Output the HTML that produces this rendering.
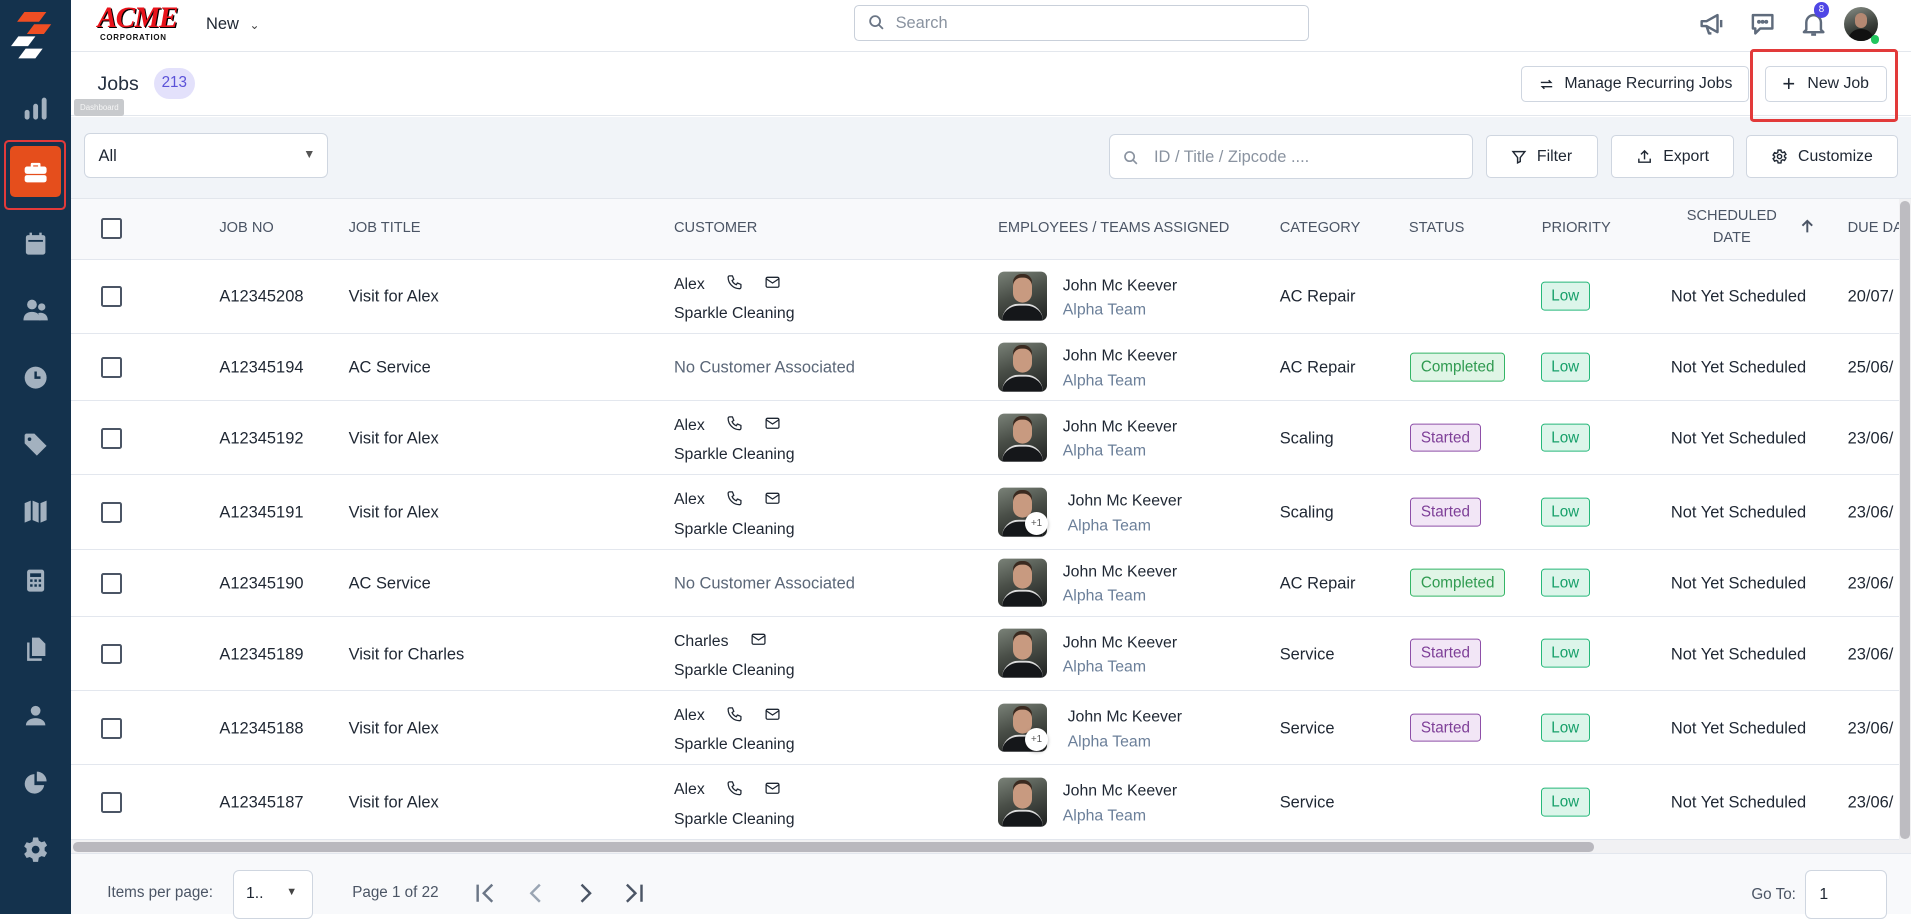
<!DOCTYPE html>
<html><head><meta charset="utf-8">
<style>
html{zoom:1.21875}
*{box-sizing:border-box;margin:0;padding:0}
body{width:1568px;height:750px;overflow:hidden;font-family:"Liberation Sans",Arial,sans-serif;color:#1f2733;background:#fff;position:relative;font-size:13px}
.abs{position:absolute}
.side{left:0;top:0;width:58px;height:750px;background:#14324d}
.ic{position:absolute;left:17px;width:24px;height:24px}
.top{left:58px;top:0;width:1510px;height:43px;border-bottom:1px solid #e3e7ed;background:#fff}
.btn{position:absolute;background:#fff;border:1px solid #cfd6e0;border-radius:4px;display:flex;align-items:center;justify-content:center;gap:8px;font-size:13px;color:#1f2733}
.th{position:absolute;font-size:12px;color:#4b5565;top:187px;transform:translateY(-50%)}
.cb{position:absolute;left:83px;width:17px;height:17px;border:2px solid #4b5565;border-radius:2px;background:#fff}
.row{position:absolute;left:58px;width:1500px;border-bottom:1px solid #e3e7ee;background:#fff}
.c{position:absolute;top:50%;transform:translateY(-50%);white-space:nowrap;font-size:13.5px;margin-top:1px}
.two{position:absolute;top:50%;transform:translateY(-50%);white-space:nowrap;margin-top:2px}
.av{position:absolute;top:50%;transform:translateY(-50%);left:761px;width:40px;height:40px;border-radius:5px;background:linear-gradient(160deg,#7a8278 0%,#4a4f48 45%,#1e2020 100%);overflow:hidden}
.av:before{content:"";position:absolute;left:12px;top:5px;width:16px;height:20px;border-radius:8px 8px 9px 9px;background:#c89a80;box-shadow:0 -3px 0 #3a2a20}
.av:after{content:"";position:absolute;left:3px;top:26px;width:34px;height:20px;border-radius:14px 14px 0 0;background:#15171a;border-top:2px solid #ddd}
.p1{position:absolute;left:783px;width:19px;height:19px;border-radius:50%;background:#fff;box-shadow:0 1px 3px rgba(0,0,0,.3);font-size:8px;color:#555;display:flex;align-items:center;justify-content:center}
.bd{position:absolute;top:50%;transform:translateY(-50%);padding:4px 8px;border-radius:3px;font-size:12.5px}
.low{left:1206px;background:#dcf5ea;border:1px solid #26b87a;color:#17a06a}
.comp{left:1099px;background:#e0f5e6;border:1px solid #34b566;color:#2f9a50}
.st{left:1099px;background:#f2e6f6;border:1px solid #8e4fa8;color:#7e3f98}
.sub{color:#6b7f99}
.ph,.ml{display:inline-block;width:14px;height:14px;vertical-align:-2px}
</style></head><body>
<svg width="0" height="0" style="position:absolute"><defs>
<symbol id="phone" viewBox="0 0 24 24"><path d="M5 3h4l2 5-2.5 1.5a11 11 0 0 0 6 6L16 13l5 2v4a2 2 0 0 1-2 2A16 16 0 0 1 3 5a2 2 0 0 1 2-2" fill="none" stroke="#1f2733" stroke-width="1.8" stroke-linejoin="round"/></symbol>
<symbol id="mail" viewBox="0 0 24 24"><rect x="3" y="5" width="18" height="14" rx="2" fill="none" stroke="#1f2733" stroke-width="1.8"/><path d="M3 7l9 6 9-6" fill="none" stroke="#1f2733" stroke-width="1.8"/></symbol>
</defs></svg>

<div class="abs side">
 <svg class="abs" style="left:9px;top:10px" width="34" height="38" viewBox="0 0 34 38"><polygon points="11,0 29,0 23,8 5,8" fill="#f04e23"/><polygon points="19,10 33,10 27,18 13,18" fill="#f04e23"/><polygon points="6,20 20,20 14,28 0,28" fill="#fff"/><polygon points="12,30 26,30 20,38 6,38" fill="#fff"/></svg>
 <svg class="ic" style="top:77px" viewBox="0 0 24 24" fill="#a3b1bf"><rect x="3" y="13" width="4" height="8" rx="2"/><rect x="10" y="8" width="4" height="13" rx="2"/><rect x="17" y="3" width="4" height="18" rx="2"/></svg>
 <div class="abs" style="left:3px;top:115px;width:51px;height:57px;border:2px solid #e23a3a;border-radius:4px"></div>
 <div class="abs" style="left:8px;top:120px;width:42px;height:42px;background:#e54e1c;border-radius:4px"></div>
 <svg class="ic" style="top:130px" viewBox="0 0 24 24" fill="#fff"><path d="M9 4h6a1 1 0 0 1 1 1v2h-2V6h-4v1H8V5a1 1 0 0 1 1-1z"/><rect x="3" y="7" width="18" height="6" rx="2"/><rect x="3" y="14" width="18" height="6" rx="2"/></svg>
 <svg class="ic" style="top:188px" viewBox="0 0 24 24" fill="#a3b1bf"><rect x="4" y="5" width="16" height="16" rx="2"/><rect x="7" y="3" width="2" height="4"/><rect x="15" y="3" width="2" height="4"/><rect x="6" y="9" width="12" height="1.5" fill="#14324d"/></svg>
 <svg class="ic" style="top:243px" viewBox="0 0 24 24" fill="#a3b1bf"><circle cx="9" cy="7" r="4"/><path d="M2 20c0-5 3-7 7-7s7 2 7 7z"/><circle cx="17" cy="9" r="3"/><path d="M15 20c0-3 0-5-1-6 4-1 8 1 8 6z"/></svg>
 <svg class="ic" style="top:298px" viewBox="0 0 24 24"><circle cx="12" cy="12" r="9" fill="#a3b1bf"/><path d="M12 7v5h4" stroke="#14324d" stroke-width="2" fill="none"/></svg>
 <svg class="ic" style="top:353px" viewBox="0 0 24 24" fill="#a3b1bf"><path d="M3 4v7l10 10 8-8L11 3H4zM7 6a1.5 1.5 0 1 1 0 3 1.5 1.5 0 0 1 0-3z"/></svg>
 <svg class="ic" style="top:408px" viewBox="0 0 24 24" fill="#a3b1bf"><path d="M3 5l5-2v16l-5 2zM9.5 3l5 2v16l-5-2zM16 5l5-2v16l-5 2z"/></svg>
 <svg class="ic" style="top:464px" viewBox="0 0 24 24"><rect x="5" y="3" width="14" height="18" rx="2" fill="#a3b1bf"/><rect x="7.5" y="6" width="9" height="3" fill="#14324d"/><g fill="#14324d"><rect x="7.5" y="11" width="2" height="2"/><rect x="11" y="11" width="2" height="2"/><rect x="14.5" y="11" width="2" height="2"/><rect x="7.5" y="15" width="2" height="2"/><rect x="11" y="15" width="2" height="2"/><rect x="14.5" y="15" width="2" height="2"/></g></svg>
 <svg class="ic" style="top:520px" viewBox="0 0 24 24" fill="#a3b1bf"><path d="M9 3h6l5 5v10H9z"/><path d="M5 7h2v13h10v2H5z"/></svg>
 <svg class="ic" style="top:575px" viewBox="0 0 24 24" fill="#a3b1bf"><circle cx="12" cy="8" r="4"/><path d="M4 20c0-4 4-6 8-6s8 2 8 6z"/></svg>
 <svg class="ic" style="top:630px" viewBox="0 0 24 24" fill="#a3b1bf"><path d="M11 5a8 8 0 1 0 8 9h-8z"/><path d="M13 3a8 8 0 0 1 8 8h-8z"/></svg>
 <svg class="ic" style="top:685px" viewBox="0 0 24 24"><path fill="#a3b1bf" d="M10 2h4l.6 2.6 2.2 1.3 2.6-.8 2 3.4-2 1.9v2.4l2 1.9-2 3.4-2.6-.8-2.2 1.3L14 22h-4l-.6-2.6-2.2-1.3-2.6.8-2-3.4 2-1.9v-2.4l-2-1.9 2-3.4 2.6.8 2.2-1.3z"/><circle cx="12" cy="12" r="3.2" fill="#14324d"/></svg>
</div>

<div class="abs top">
 <div class="abs" style="left:22px;top:3px;font-family:'Liberation Serif',serif;font-weight:bold;font-size:24px;color:#e8131b;letter-spacing:-1px;line-height:24px;text-shadow:1px 1px 0 #000;font-style:italic">ACME</div>
 <div class="abs" style="left:24px;top:27px;font-size:6.5px;font-weight:bold;color:#111;letter-spacing:.6px">CORPORATION</div>
 <div class="abs" style="left:111px;top:12px;font-size:13.5px">New <span style="font-size:10px;margin-left:5px;color:#444">&#8964;</span></div>
 <div class="abs" style="left:643px;top:4px;width:373px;height:30px;border:1px solid #c9d0da;border-radius:4px">
  <svg class="abs" style="left:10px;top:7px" width="14" height="14" viewBox="0 0 24 24" fill="none" stroke="#6b7686" stroke-width="2.5"><circle cx="10" cy="10" r="7"/><path d="M15 15l6 6"/></svg>
  <span class="abs" style="left:33px;top:7px;font-size:13.5px;color:#8a93a0">Search</span>
 </div>
 <svg class="abs" style="left:1335px;top:7px" width="24" height="24" viewBox="0 0 24 24" fill="none" stroke="#5f6b7c" stroke-width="2" stroke-linejoin="round"><path d="M3 10h4l9-5v14l-9-5H3z"/><path d="M7 14l2 6h2"/><path d="M19 9v6"/></svg>
 <svg class="abs" style="left:1376px;top:7px" width="24" height="24" viewBox="0 0 24 24" fill="none" stroke="#5f6b7c" stroke-width="2" stroke-linejoin="round"><path d="M4 5h16v11H10l-4 4v-4H4z"/><circle cx="9" cy="10.5" r=".6" fill="#5f6b7c"/><circle cx="12" cy="10.5" r=".6" fill="#5f6b7c"/><circle cx="15" cy="10.5" r=".6" fill="#5f6b7c"/></svg>
 <svg class="abs" style="left:1418px;top:7px" width="24" height="24" viewBox="0 0 24 24" fill="none" stroke="#5f6b7c" stroke-width="2" stroke-linejoin="round"><path d="M6 17V11a6 6 0 0 1 12 0v6l2 2H4z"/><path d="M10 21h4"/></svg>
 <div class="abs" style="left:1430px;top:2px;width:13px;height:13px;border-radius:50%;background:#4f46e5;color:#fff;font-size:8px;text-align:center;line-height:13px">8</div>
 <div class="abs" style="left:1455px;top:6px;width:28px;height:28px;border-radius:50%;background:linear-gradient(160deg,#8a9088,#3d423d 55%,#111);overflow:hidden"><div class="abs" style="left:9px;top:5px;width:10px;height:12px;border-radius:5px;background:#b48872"></div><div class="abs" style="left:3px;top:18px;width:22px;height:12px;border-radius:10px 10px 0 0;background:#111"></div></div>
 <div class="abs" style="left:1477px;top:29px;width:7px;height:7px;border-radius:50%;background:#22c55e"></div>
</div>

<div class="abs" style="left:58px;top:43px;width:1510px;height:52px;background:#fff;border-bottom:1px solid #e3e7ed"></div>
<div class="abs" style="left:80px;top:60px;font-size:16px;color:#253040">Jobs</div>
<div class="abs" style="left:126px;top:56px;width:34px;height:25px;border-radius:13px;background:#e3e1fb;color:#5b52d8;font-size:12.5px;text-align:center;line-height:25px">213</div>
<div class="btn" style="left:1248px;top:54px;width:187px;height:30px"><svg width="14" height="14" viewBox="0 0 24 24" fill="none" stroke="#1f2733" stroke-width="2"><path d="M4 9h14l-3-3M20 15H6l3 3"/></svg>Manage Recurring Jobs</div>
<div class="btn" style="left:1448px;top:54px;width:100px;height:30px;gap:10px"><span style="font-size:18px;font-weight:300">+</span>New Job</div>

<div class="abs" style="left:58px;top:96px;width:1510px;height:67px;background:#f1f4f8;border-bottom:1px solid #e2e6ec"></div>
<div class="abs" style="left:1436px;top:40px;width:121px;height:60px;border:2.5px solid #e23a3a;border-radius:3px"></div>
<div class="abs" style="left:61px;top:81px;width:41px;height:14px;background:#c8cacd;border-radius:2px;font-size:6.5px;color:#f5f5f5;text-align:center;line-height:14px">Dashboard</div>
<div class="abs" style="left:69px;top:109px;width:200px;height:37px;background:#fff;border:1px solid #cfd6e0;border-radius:5px"><span class="abs" style="left:11px;top:11px;font-size:13.5px">All</span><span class="abs" style="left:179px;top:11px;font-size:10px;color:#555">&#9660;</span></div>
<div class="abs" style="left:910px;top:110px;width:299px;height:37px;background:#fff;border:1px solid #cfd6e0;border-radius:5px">
 <svg class="abs" style="left:11px;top:12px" width="13" height="13" viewBox="0 0 24 24" fill="none" stroke="#8a93a0" stroke-width="2.5"><circle cx="10" cy="10" r="7"/><path d="M15 15l6 6"/></svg>
 <span class="abs" style="left:36px;top:11px;font-size:13.5px;color:#8a93a0">ID / Title / Zipcode ....</span></div>
<div class="btn" style="left:1219px;top:111px;width:92px;height:35px"><svg width="13" height="13" viewBox="0 0 24 24" fill="none" stroke="#1f2733" stroke-width="2.2"><path d="M3 4h18l-7 9v6l-4 2v-8z"/></svg>Filter</div>
<div class="btn" style="left:1322px;top:111px;width:101px;height:35px"><svg width="14" height="14" viewBox="0 0 24 24" fill="none" stroke="#1f2733" stroke-width="2"><path d="M12 16V4M7 9l5-5 5 5M4 15v5h16v-5"/></svg>Export</div>
<div class="btn" style="left:1433px;top:111px;width:124px;height:35px"><svg width="14" height="14" viewBox="0 0 24 24" fill="none" stroke="#1f2733" stroke-width="2"><circle cx="12" cy="12" r="3"/><path d="M10 3h4l.5 2.5 2 1 2.5-1 2 3.5-2 1.5v2l2 1.5-2 3.5-2.5-1-2 1L14 21h-4l-.5-2.5-2-1-2.5 1-2-3.5 2-1.5v-2l-2-1.5 2-3.5 2.5 1 2-1z"/></svg>Customize</div>

<div class="abs" style="left:58px;top:163px;width:1500px;height:50px;background:#f8f9fb;border-bottom:1px solid #e3e7ee"></div>
<div class="cb" style="top:179px"></div>
<div class="th" style="left:180px">JOB NO</div>
<div class="th" style="left:286px">JOB TITLE</div>
<div class="th" style="left:553px">CUSTOMER</div>
<div class="th" style="left:819px">EMPLOYEES / TEAMS ASSIGNED</div>
<div class="th" style="left:1050px">CATEGORY</div>
<div class="th" style="left:1156px">STATUS</div>
<div class="th" style="left:1265px">PRIORITY</div>
<div class="th" style="left:1384px;text-align:center;line-height:18px">SCHEDULED<br>DATE</div>
<svg class="abs" style="left:1477px;top:180px" width="12" height="12" viewBox="0 0 12 12" fill="none" stroke="#4b5565" stroke-width="1.6"><path d="M6 11V2M2 5.5 6 1.5l4 4"/></svg>
<div class="th" style="left:1516px">DUE DA</div>

<div class="row" style="top:213px;height:61px">
 <div class="cb" style="left:25px;top:22px"></div>
 <div class="c" style="left:122px">A12345208</div><div class="c" style="left:228px">Visit for Alex</div>
 <div class="two" style="left:495px;line-height:24px">Alex <svg class="ph" style="margin-left:14px"><use href="#phone"/></svg><svg class="ml" style="margin-left:17px"><use href="#mail"/></svg><br>Sparkle Cleaning</div>
 <div class="av"></div><div class="two" style="left:814px;line-height:20px">John Mc Keever<br><span class="sub">Alpha Team</span></div>
 <div class="c" style="left:992px">AC Repair</div>
 <div class="bd low">Low</div>
 <div class="c" style="left:1313px">Not Yet Scheduled</div><div class="c" style="left:1458px">20/07/</div>
</div>
<div class="row" style="top:274px;height:55px">
 <div class="cb" style="left:25px;top:19px"></div>
 <div class="c" style="left:122px">A12345194</div><div class="c" style="left:228px">AC Service</div>
 <div class="c" style="left:495px;color:#5b6778">No Customer Associated</div>
 <div class="av"></div><div class="two" style="left:814px;line-height:20px">John Mc Keever<br><span class="sub">Alpha Team</span></div>
 <div class="c" style="left:992px">AC Repair</div>
 <div class="bd comp">Completed</div><div class="bd low">Low</div>
 <div class="c" style="left:1313px">Not Yet Scheduled</div><div class="c" style="left:1458px">25/06/</div>
</div>
<div class="row" style="top:329px;height:61px">
 <div class="cb" style="left:25px;top:22px"></div>
 <div class="c" style="left:122px">A12345192</div><div class="c" style="left:228px">Visit for Alex</div>
 <div class="two" style="left:495px;line-height:24px">Alex <svg class="ph" style="margin-left:14px"><use href="#phone"/></svg><svg class="ml" style="margin-left:17px"><use href="#mail"/></svg><br>Sparkle Cleaning</div>
 <div class="av"></div><div class="two" style="left:814px;line-height:20px">John Mc Keever<br><span class="sub">Alpha Team</span></div>
 <div class="c" style="left:992px">Scaling</div>
 <div class="bd st">Started</div><div class="bd low">Low</div>
 <div class="c" style="left:1313px">Not Yet Scheduled</div><div class="c" style="left:1458px">23/06/</div>
</div>
<div class="row" style="top:390px;height:61px">
 <div class="cb" style="left:25px;top:22px"></div>
 <div class="c" style="left:122px">A12345191</div><div class="c" style="left:228px">Visit for Alex</div>
 <div class="two" style="left:495px;line-height:24px">Alex <svg class="ph" style="margin-left:14px"><use href="#phone"/></svg><svg class="ml" style="margin-left:17px"><use href="#mail"/></svg><br>Sparkle Cleaning</div>
 <div class="av"></div><div class="p1" style="top:30px">+1</div><div class="two" style="left:818px;line-height:20px">John Mc Keever<br><span class="sub">Alpha Team</span></div>
 <div class="c" style="left:992px">Scaling</div>
 <div class="bd st">Started</div><div class="bd low">Low</div>
 <div class="c" style="left:1313px">Not Yet Scheduled</div><div class="c" style="left:1458px">23/06/</div>
</div>
<div class="row" style="top:451px;height:55px">
 <div class="cb" style="left:25px;top:19px"></div>
 <div class="c" style="left:122px">A12345190</div><div class="c" style="left:228px">AC Service</div>
 <div class="c" style="left:495px;color:#5b6778">No Customer Associated</div>
 <div class="av"></div><div class="two" style="left:814px;line-height:20px">John Mc Keever<br><span class="sub">Alpha Team</span></div>
 <div class="c" style="left:992px">AC Repair</div>
 <div class="bd comp">Completed</div><div class="bd low">Low</div>
 <div class="c" style="left:1313px">Not Yet Scheduled</div><div class="c" style="left:1458px">23/06/</div>
</div>
<div class="row" style="top:506px;height:61px">
 <div class="cb" style="left:25px;top:22px"></div>
 <div class="c" style="left:122px">A12345189</div><div class="c" style="left:228px">Visit for Charles</div>
 <div class="two" style="left:495px;line-height:24px">Charles <svg class="ml" style="margin-left:14px"><use href="#mail"/></svg><br>Sparkle Cleaning</div>
 <div class="av"></div><div class="two" style="left:814px;line-height:20px">John Mc Keever<br><span class="sub">Alpha Team</span></div>
 <div class="c" style="left:992px">Service</div>
 <div class="bd st">Started</div><div class="bd low">Low</div>
 <div class="c" style="left:1313px">Not Yet Scheduled</div><div class="c" style="left:1458px">23/06/</div>
</div>
<div class="row" style="top:567px;height:61px">
 <div class="cb" style="left:25px;top:22px"></div>
 <div class="c" style="left:122px">A12345188</div><div class="c" style="left:228px">Visit for Alex</div>
 <div class="two" style="left:495px;line-height:24px">Alex <svg class="ph" style="margin-left:14px"><use href="#phone"/></svg><svg class="ml" style="margin-left:17px"><use href="#mail"/></svg><br>Sparkle Cleaning</div>
 <div class="av"></div><div class="p1" style="top:30px">+1</div><div class="two" style="left:818px;line-height:20px">John Mc Keever<br><span class="sub">Alpha Team</span></div>
 <div class="c" style="left:992px">Service</div>
 <div class="bd st">Started</div><div class="bd low">Low</div>
 <div class="c" style="left:1313px">Not Yet Scheduled</div><div class="c" style="left:1458px">23/06/</div>
</div>
<div class="row" style="top:628px;height:61px">
 <div class="cb" style="left:25px;top:22px"></div>
 <div class="c" style="left:122px">A12345187</div><div class="c" style="left:228px">Visit for Alex</div>
 <div class="two" style="left:495px;line-height:24px">Alex <svg class="ph" style="margin-left:14px"><use href="#phone"/></svg><svg class="ml" style="margin-left:17px"><use href="#mail"/></svg><br>Sparkle Cleaning</div>
 <div class="av"></div><div class="two" style="left:814px;line-height:20px">John Mc Keever<br><span class="sub">Alpha Team</span></div>
 <div class="c" style="left:992px">Service</div>
 <div class="bd low">Low</div>
 <div class="c" style="left:1313px">Not Yet Scheduled</div><div class="c" style="left:1458px">23/06/</div>
</div>

<div class="abs" style="left:58px;top:689px;width:1500px;height:11px;background:#f1f1f3"></div>
<div class="abs" style="left:60px;top:691px;width:1248px;height:8px;border-radius:4px;background:#b9b8be"></div>
<div class="abs" style="left:1558px;top:163px;width:10px;height:537px;background:#f1f1f3"></div>
<div class="abs" style="left:1559px;top:165px;width:8px;height:523px;border-radius:4px;background:#bdbcc1"></div>

<div class="abs" style="left:58px;top:700px;width:1510px;height:50px;background:#f8f9fb;border-top:1px solid #e3e7ee"></div>
<div class="abs" style="left:88px;top:725px;font-size:12.5px;color:#4b5565">Items per page:</div>
<div class="abs" style="left:191px;top:714px;width:66px;height:40px;background:#fff;border:1px solid #cfd6e0;border-radius:5px"><span class="abs" style="left:10px;top:11px;font-size:13px">1..</span><span class="abs" style="left:43px;top:12px;font-size:9px;color:#444">&#9660;</span></div>
<div class="abs" style="left:289px;top:725px;font-size:12.5px;color:#4b5565">Page 1 of 22</div>
<svg class="abs" style="left:389px;top:723px" width="20" height="20" viewBox="0 0 20 20" fill="none" stroke="#6b7686" stroke-width="2"><path d="M3 3v14M15 3l-7 7 7 7"/></svg>
<svg class="abs" style="left:430px;top:723px" width="20" height="20" viewBox="0 0 20 20" fill="none" stroke="#9aa5b3" stroke-width="2"><path d="M13 3l-7 7 7 7"/></svg>
<svg class="abs" style="left:470px;top:723px" width="20" height="20" viewBox="0 0 20 20" fill="none" stroke="#4b5565" stroke-width="2"><path d="M7 3l7 7-7 7"/></svg>
<svg class="abs" style="left:510px;top:723px" width="20" height="20" viewBox="0 0 20 20" fill="none" stroke="#4b5565" stroke-width="2"><path d="M4 3l7 7-7 7M16 3v14"/></svg>
<div class="abs" style="left:1437px;top:727px;font-size:12.5px;color:#4b5565">Go To:</div>
<div class="abs" style="left:1481px;top:714px;width:67px;height:40px;background:#fff;border:1px solid #cfd6e0;border-radius:5px"><span class="abs" style="left:11px;top:12px;font-size:13px">1</span></div>
</body></html>
